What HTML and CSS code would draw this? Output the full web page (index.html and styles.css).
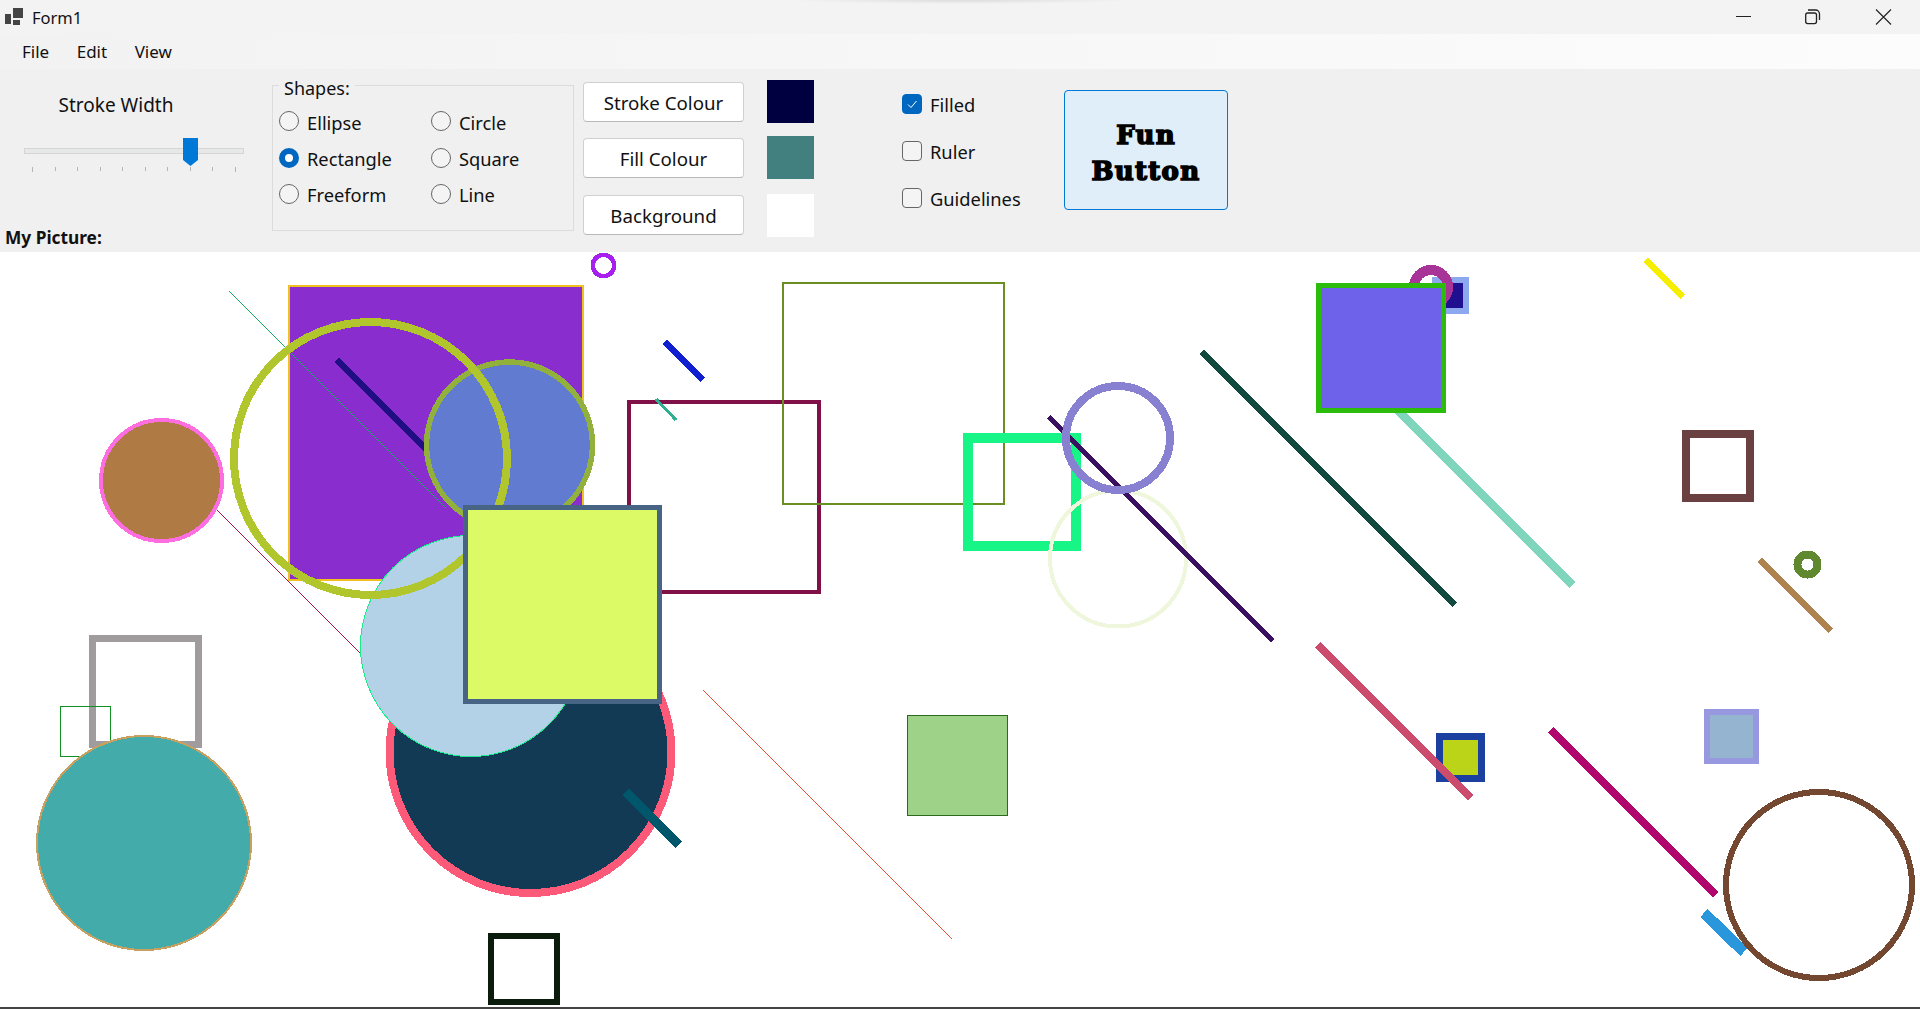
FILE: index.html
```html
<!DOCTYPE html>
<html lang="en">
<head>
<meta charset="utf-8">
<title>Form1</title>
<link rel="stylesheet" href="styles.css">
</head>
<body>
<div class="window">
  <header class="title-bar">
    <svg class="app-icon" width="18" height="17" viewBox="0 0 18 17"><path fill="#444" d="M8 0h10v10H8zM0 6h6v10H0zM8 12h7v5H8z"/></svg>
    <span class="title-text">Form1</span>
    <div class="win-controls">
      <svg class="win-btn" width="70" height="34" viewBox="0 0 70 34"><path d="M27 16.5h15" stroke="#222" stroke-width="1" fill="none"/></svg>
      <svg class="win-btn" width="70" height="34" viewBox="0 0 70 34"><g fill="none" stroke="#222" stroke-width="1.3"><rect x="26.7" y="13" width="10.8" height="10.6" rx="2"/><path d="M29 10h7.5a4 4 0 0 1 4 4V20"/></g></svg>
      <svg class="win-btn" width="70" height="34" viewBox="0 0 70 34"><path d="M27 9.5l15 15M42 9.5l-15 15" stroke="#222" stroke-width="1.1" fill="none"/></svg>
    </div>
  </header>
  <nav class="menu-bar">
    <span class="menu-item">File</span>
    <span class="menu-item">Edit</span>
    <span class="menu-item">View</span>
  </nav>
  <section class="toolbar">
    <div class="stroke-panel">
      <div class="stroke-label">Stroke Width</div>
      <div class="slider">
        <div class="slider-track"></div>
        <svg class="slider-thumb" width="15" height="28" viewBox="0 0 15 28"><path fill="#0078d7" d="M0 0h15v22l-7.5 6L0 22z"/></svg>
      </div>
      <div class="ticks">
        <i class="tick"></i><i class="tick"></i><i class="tick"></i><i class="tick"></i><i class="tick"></i><i class="tick"></i><i class="tick"></i><i class="tick"></i><i class="tick"></i><i class="tick"></i>
      </div>
      <div class="picture-label">My Picture:</div>
    </div>
    <fieldset class="shapes-group">
      <legend class="shapes-legend">Shapes:</legend>
      <div class="radio-grid">
        <label class="option"><span class="radio"></span>Ellipse</label>
        <label class="option"><span class="radio"></span>Circle</label>
        <label class="option"><span class="radio radio-on"></span>Rectangle</label>
        <label class="option"><span class="radio"></span>Square</label>
        <label class="option"><span class="radio"></span>Freeform</label>
        <label class="option"><span class="radio"></span>Line</label>
      </div>
    </fieldset>
    <div class="button-col">
      <button class="btn">Stroke Colour</button>
      <button class="btn">Fill Colour</button>
      <button class="btn btn-last">Background</button>
    </div>
    <div class="swatch-col">
      <div class="swatch swatch-stroke"></div>
      <div class="swatch swatch-fill"></div>
      <div class="swatch swatch-bg"></div>
    </div>
    <div class="check-col">
      <label class="option"><span class="check check-on"><svg width="18" height="18" viewBox="0 0 18 18"><path d="M5 9.5l3 3 5.5-6.5" fill="none" stroke="#fff" stroke-width="1"/></svg></span>Filled</label>
      <label class="option"><span class="check"></span>Ruler</label>
      <label class="option"><span class="check"></span>Guidelines</label>
    </div>
    <button class="fun-btn">Fun<br>Button</button>
  </section>
  <main class="canvas">
    <svg class="drawing" width="1920" height="755" viewBox="0 252 1920 755" shape-rendering="crispEdges">
      <rect x="289" y="286" width="294" height="294" fill="#8a2dcf" stroke="#f0c020" stroke-width="2"/>
      <line x1="337" y1="360" x2="432" y2="455" stroke="#1f0f82" stroke-width="6"/>
      <line x1="229" y1="291" x2="446" y2="508" stroke="#12b05c" stroke-width="1"/>
      <circle cx="509.5" cy="445" r="83" fill="#617bd1" stroke="#92b03c" stroke-width="5.5"/>
      <circle cx="161.5" cy="480.5" r="60.5" fill="#b07a45" stroke="#ff6ee0" stroke-width="4"/>
      <line x1="217" y1="510" x2="362" y2="655" stroke="#a81040" stroke-width="1"/>
      <circle cx="530.5" cy="752" r="141" fill="#133a54" stroke="#fc5a78" stroke-width="8"/>
      <circle cx="471" cy="646" r="110.5" fill="#b3d2e8" stroke="#1ce88c" stroke-width="1"/>
      <circle cx="370.5" cy="458.5" r="136.5" fill="none" stroke="#b0c62c" stroke-width="8"/>
      <rect x="629" y="402" width="190" height="190" fill="none" stroke="#801048" stroke-width="4"/>
      <rect x="465.5" y="507.5" width="194" height="194" fill="#dcfa66" stroke="#486485" stroke-width="5"/>
      <circle cx="603.5" cy="265.5" r="10.7" fill="none" stroke="#a820f0" stroke-width="4.5"/>
      <line x1="665" y1="342" x2="703" y2="380" stroke="#1020d0" stroke-width="7"/>
      <line x1="656" y1="399" x2="676" y2="420" stroke="#30b090" stroke-width="3"/>
      <rect x="783" y="283" width="221" height="221" fill="none" stroke="#6b8e23" stroke-width="2"/>
      <rect x="968" y="438" width="108" height="108" fill="none" stroke="#16f585" stroke-width="10"/>
      <circle cx="1118" cy="558.5" r="68" fill="none" stroke="#eef6dc" stroke-width="4"/>
      <line x1="1049" y1="417" x2="1273" y2="641" stroke="#3b1060" stroke-width="5"/>
      <circle cx="1118" cy="438" r="52" fill="none" stroke="#8880d0" stroke-width="8"/>
      <line x1="1202" y1="352" x2="1455" y2="605" stroke="#124a40" stroke-width="7"/>
      <line x1="1394" y1="407" x2="1573" y2="585" stroke="#7fd6bd" stroke-width="8.5"/>
      <rect x="1435" y="280" width="31" height="31" fill="#201090" stroke="#8ca8ee" stroke-width="6"/>
      <circle cx="1431" cy="287" r="17" fill="none" stroke="#a83498" stroke-width="10"/>
      <rect x="1318.5" y="285.5" width="125" height="125" fill="#6e62ea" stroke="#2cbc0c" stroke-width="5"/>
      <line x1="1646" y1="260" x2="1683" y2="297" stroke="#f5ee00" stroke-width="7"/>
      <rect x="1686" y="434" width="64" height="64" fill="none" stroke="#6a4040" stroke-width="8"/>
      <line x1="1760" y1="560" x2="1831" y2="631" stroke="#ae8350" stroke-width="6"/>
      <circle cx="1807.5" cy="564.5" r="10" fill="none" stroke="#60882e" stroke-width="8"/>
      <rect x="1439.5" y="736.5" width="42" height="42" fill="#bcd418" stroke="#1c40a0" stroke-width="7"/>
      <line x1="1318" y1="645" x2="1471" y2="798" stroke="#cc4c6e" stroke-width="8"/>
      <line x1="1551" y1="730" x2="1716" y2="895" stroke="#b0066e" stroke-width="8"/>
      <rect x="1707" y="712" width="49" height="49" fill="#94b4d0" stroke="#9898e0" stroke-width="6"/>
      <line x1="1704" y1="913" x2="1744" y2="952" stroke="#2a96dc" stroke-width="11"/>
      <circle cx="1819" cy="885" r="93" fill="none" stroke="#744830" stroke-width="6"/>
      <rect x="92.5" y="638.5" width="106" height="106" fill="none" stroke="#a09c9e" stroke-width="7"/>
      <rect x="60.5" y="706.5" width="50" height="50" fill="none" stroke="#109020" stroke-width="1"/>
      <circle cx="144" cy="843" r="107" fill="#43acaa" stroke="#c8a060" stroke-width="2"/>
      <line x1="626" y1="792" x2="679" y2="845" stroke="#00566a" stroke-width="9"/>
      <rect x="491" y="936" width="66" height="66" fill="none" stroke="#0c1c0c" stroke-width="6"/>
      <rect x="907.5" y="715.5" width="100" height="100" fill="#9ed288" stroke="#2e6a1e" stroke-width="1"/>
      <line x1="703" y1="690" x2="952" y2="939" stroke="#e8503c" stroke-width="1"/>
    </svg>
  </main>
  <div class="bottom-edge"></div>
</div>
</body>
</html>
```
FILE: styles.css
```css
* { box-sizing: border-box; }
html, body { margin: 0; height: 100%; overflow: hidden; }
body { font-family: "Noto Sans", "Open Sans", sans-serif; font-size: 18px; color: #111; }
.window { display: flex; flex-direction: column; height: 1009px; background: #f0f0f0; }

.title-bar { display: flex; align-items: center; height: 34px; padding-left: 5px; flex: none; background: radial-gradient(ellipse 170px 4px at 961px 0, #dcdcdc, transparent), #f3f3f3; }
.app-icon { flex: none; margin-top: -2px; }
.title-text { margin-left: 9px; font-size: 16.5px; }
.win-controls { display: flex; margin-left: auto; padding-right: 1px; }
.win-btn { display: block; }

.menu-bar { display: flex; align-items: center; height: 35px; flex: none; padding-left: 22px; background: linear-gradient(90deg, #f2f2f2, #fcfcfc); }
.menu-item { font-size: 17px; margin-right: 27.5px; }

.toolbar { display: flex; align-items: flex-start; height: 183px; flex: none; background: #f0f0f0; }

.stroke-panel { width: 272px; height: 183px; display: flex; flex-direction: column; flex: none; }
.stroke-label { text-align: center; width: 232px; margin-top: 22px; line-height: 28px; height: 28px; font-size: 19px; }
.slider { position: relative; margin: 29px 0 0 24px; width: 220px; height: 6px; }
.slider-track { height: 6px; background: #e6e9e8; border: 1px solid #d4d6d4; }
.slider-thumb { position: absolute; left: 159px; top: -10px; display: block; }
.ticks { display: flex; justify-content: space-between; width: 204px; margin: 13px 0 0 32px; height: 5px; }
.tick { width: 1px; height: 4px; background: #b5b5b5; display: block; }
.tick:first-child, .tick:last-child { height: 5px; }
.picture-label { margin: auto 0 0 5px; padding-bottom: 3px; font-size: 17.3px; font-weight: 700; line-height: 22px; }

.shapes-group { flex: none; width: 302px; height: 160px; margin: 2px 0 0; padding: 0 0 0 6px; border: 1px solid #dcdcdc; }
.shapes-legend { padding: 6px 5px 0; margin-left: 0; line-height: 22px; font-size: 18px; }
.radio-grid { display: grid; grid-template-columns: 152px 1fr; grid-template-rows: 37px 36px 35px; margin-top: 5px; }

.option { display: flex; align-items: center; white-space: nowrap; font-size: 18.3px; line-height: 24px; }
.radio { width: 20px; height: 20px; border: 1px solid #666; border-radius: 50%; margin-right: 8px; flex: none; position: relative; top: -1px; background: #f4f4f4; }
.radio-grid .option:nth-child(-n+2) .radio { top: -2px; }
.radio-on { border: 6px solid #0067c0; background: #fff; }

.button-col { display: flex; flex-direction: column; flex: none; margin: 13px 0 0 9px; }
.btn { width: 161px; height: 40px; margin-bottom: 16px; padding: 0; background: #fff; border: 1px solid #d0d0d0; border-bottom-color: #b8b8b8; border-radius: 4px; font-family: inherit; font-size: 18.7px; color: #111; }
.btn:nth-child(2) { margin-bottom: 17px; }
.btn-last { margin-bottom: 0; }

.swatch-col { display: flex; flex-direction: column; flex: none; margin: 11px 0 0 23px; }
.swatch { width: 47px; height: 43px; margin-bottom: 13px; }
.swatch:nth-child(2) { margin-bottom: 15px; }
.swatch-stroke { background: #000040; }
.swatch-fill { background: #428080; }
.swatch-bg { background: #fff; }

.check-col { display: flex; flex-direction: column; flex: none; width: 162px; margin: 24px 0 0 88px; }
.check-col .option { height: 24px; margin-bottom: 23px; }
.check { width: 20px; height: 20px; border: 1px solid #666; border-radius: 4px; margin-right: 8px; flex: none; background: #f4f4f4; position: relative; top: -1px; }
.check svg { display: block; margin: 0; }
.check-on { background: #0067c0; border-color: #0067c0; }

.fun-btn { flex: none; width: 164px; height: 120px; margin-top: 21px; padding: 5px 0 0; background: #e0eef9; border: 1px solid #0078d4; border-radius: 4px; color: #000; font-family: "DejaVu Serif", serif; font-weight: 700; font-size: 26px; letter-spacing: 1.3px; line-height: 36px; -webkit-text-stroke: 1.6px #000; }

.canvas { flex: 1; background: #fff; overflow: hidden; min-height: 0; }
.drawing { display: block; }
.bottom-edge { height: 2px; flex: none; background: #444; }
```
